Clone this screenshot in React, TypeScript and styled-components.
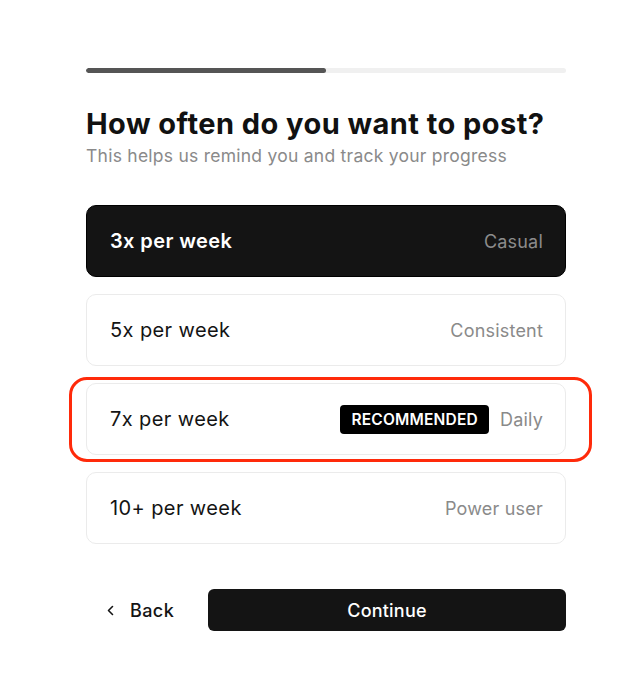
import React from "react";
import styled, { createGlobalStyle } from "styled-components";

const Global = createGlobalStyle`
  html, body { margin: 0; padding: 0; background: #ffffff; }
  body { font-family: Inter, "Noto Sans", "Liberation Sans", sans-serif; color: #111111; -webkit-font-smoothing: antialiased; }
  * { box-sizing: border-box; }
`;

const Page = styled.div`
  width: 636px;
  min-height: 698px;
  padding: 68px 0 0 86px;
`;

const Column = styled.div`
  width: 480px;
  display: flex;
  flex-direction: column;
`;

const Track = styled.div`
  height: 5px;
  border-radius: 3px;
  background: #f0f0f0;
  overflow: hidden;
`;

const Fill = styled.div`
  height: 100%;
  border-radius: 3px;
  background: #555555;
`;

const Title = styled.h1`
  margin: 33px 0 0;
  font-size: 29px;
  line-height: 36px;
  font-weight: 700;
  letter-spacing: 0.45px;
  color: #111111;
`;

const Subtitle = styled.p`
  margin: 3px 0 0;
  font-size: 17.5px;
  line-height: 22px;
  letter-spacing: 0.25px;
  color: #8a8a8a;
`;

const Options = styled.div`
  display: flex;
  flex-direction: column;
  gap: 17px;
  margin-top: 38px;
`;

const Option = styled.div<{ $selected?: boolean }>`
  position: relative;
  height: 72px;
  display: flex;
  align-items: center;
  padding: 0 22px 0 23px;
  border-radius: 10px;
  border: 1.5px solid ${(p) => (p.$selected ? "#000000" : "#ebebeb")};
  background: ${(p) => (p.$selected ? "#141414" : "#ffffff")};
`;

const OptionLabel = styled.span<{ $selected?: boolean }>`
  flex: 1;
  font-size: 20px;
  letter-spacing: 0.4px;
  font-weight: ${(p) => (p.$selected ? 600 : 400)};
  color: ${(p) => (p.$selected ? "#ffffff" : "#141414")};
`;

const OptionRight = styled.div`
  display: flex;
  align-items: center;
  gap: 11px;
`;

const Hint = styled.span<{ $selected?: boolean }>`
  font-size: 18px;
  letter-spacing: 0.2px;
  color: ${(p) => (p.$selected ? "#8c8c8c" : "#8a8a8a")};
`;

const Badge = styled.span`
  height: 29px;
  padding: 0 11px;
  display: inline-flex;
  align-items: center;
  border-radius: 4px;
  background: #000000;
  color: #ffffff;
  font-size: 15.5px;
  font-weight: 600;
  letter-spacing: 0.2px;
`;

const Highlight = styled.div`
  position: absolute;
  left: -18px;
  right: -27px;
  top: -7px;
  bottom: -8px;
  border: 3.5px solid #ff2a0a;
  border-radius: 18px;
  pointer-events: none;
`;

const Footer = styled.div`
  display: flex;
  align-items: center;
  gap: 12px;
  margin-top: 45px;
`;

const BackButton = styled.button`
  height: 42px;
  width: 110px;
  display: flex;
  align-items: center;
  gap: 16px;
  padding: 0 0 0 21px;
  border: none;
  background: transparent;
  font-family: inherit;
  font-size: 18px;
  letter-spacing: 0.4px;
  font-weight: 500;
  color: #141414;
`;

const ContinueButton = styled.button`
  flex: 1;
  height: 42px;
  border: none;
  border-radius: 6px;
  background: #141414;
  color: #ffffff;
  font-family: inherit;
  font-size: 18px;
  letter-spacing: 0.2px;
  font-weight: 500;
`;

const options = [
  { label: "3x per week", hint: "Casual", selected: true },
  { label: "5x per week", hint: "Consistent" },
  { label: "7x per week", hint: "Daily", recommended: true },
  { label: "10+ per week", hint: "Power user" },
];

export default function App() {
  return (
    <>
      <Global />
      <Page>
        <Column>
          <Track>
            <Fill style={{ width: "50%" }} />
          </Track>
          <Title>How often do you want to post?</Title>
          <Subtitle>This helps us remind you and track your progress</Subtitle>
          <Options>
            {options.map((o) => (
              <Option key={o.label} $selected={o.selected}>
                <OptionLabel $selected={o.selected}>{o.label}</OptionLabel>
                <OptionRight>
                  {o.recommended && <Badge>RECOMMENDED</Badge>}
                  <Hint $selected={o.selected}>{o.hint}</Hint>
                </OptionRight>
                {o.recommended && <Highlight />}
              </Option>
            ))}
          </Options>
          <Footer>
            <BackButton>
              <svg width="7" height="11" viewBox="0 0 7 11" fill="none">
                <path d="M5.5 1.5 L1.5 5.5 L5.5 9.5" stroke="#141414" strokeWidth="1.6" strokeLinecap="round" strokeLinejoin="round" />
              </svg>
              Back
            </BackButton>
            <ContinueButton>Continue</ContinueButton>
          </Footer>
        </Column>
      </Page>
    </>
  );
}
